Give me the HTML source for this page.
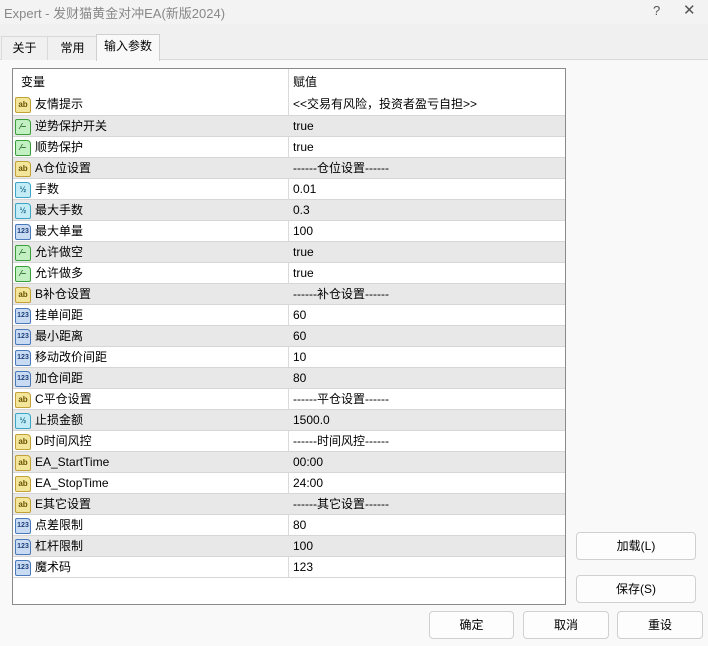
<!DOCTYPE html>
<html><head><meta charset="utf-8"><style>
body{margin:0;width:708px;height:645px;background:#f0f0f0;font-family:"Liberation Sans","Noto Sans CJK SC",sans-serif;font-size:12px;color:#000;position:relative;overflow:hidden}
.title{position:absolute;left:0;top:0;width:708px;height:24px;background:#f3f3f3;color:#888;font-size:13px}
.title span{position:absolute;top:3px}
.tab{position:absolute;top:36px;height:23px;line-height:22px;text-align:center;border:1px solid #d9d9d9;border-bottom:none;background:#f0f0f0;font-size:12px}
.panel{position:absolute;left:0;top:59px;width:708px;height:586px;background:#f9f9f9;border-top:1px solid #d9d9d9}
.tbl{position:absolute;left:12px;top:68px;width:552px;height:535px;border:1px solid #8a8a8a;background:#fff}
.row{position:absolute;left:0;width:552px;height:21px;line-height:21px}
.row.g{background:#e8e8e8}
.row.b{border-top:1px solid #d6d6d6;height:20px}
.c1{position:absolute;left:22px}
.c2{position:absolute;left:280px}
.div{position:absolute;left:275px;top:0;width:1px;height:508px;background:#dadada}
.ic{position:absolute;left:2px;top:3px;width:14px;height:14px;border:1px solid;border-radius:2px 4px 2px 2px;font-size:8px;line-height:14px;text-align:center;font-weight:bold}
.ab{background:#f3e59a;border-color:#c2a238;color:#6b5300}
.gr{background:#c3f0c3;border-color:#3a9e3a;color:#206020}
.hf{background:#c3ecf7;border-color:#3ea4c6;color:#176a8a}
.nm{background:#c9dbf2;border-color:#4a78bd;color:#1d3f7a;font-size:7px}
.btn{position:absolute;height:26px;line-height:26px;text-align:center;background:#fdfdfd;border:1px solid #d0d0d0;border-radius:4px;font-size:12px}
</style></head><body>
<div class="title"><span style="left:4px">Expert - 发财猫黄金对冲EA(新版2024)</span><span style="left:653px;color:#555">?</span><span style="left:683px;color:#555;font-size:15px;top:1px">✕</span></div>
<div class="panel"></div>
<div class="tab" style="left:1px;width:45px">关于</div>
<div class="tab" style="left:47px;width:49px">常用</div>
<div class="tab" style="left:96px;top:34px;height:26px;width:62px;background:#f9f9f9;border-color:#d0d0d0;z-index:2">输入参数</div>
<div class="tbl">
<div class="div"></div>
<div class="row" style="top:1px;height:24px;line-height:24px"><span class="c1" style="left:8px">变量</span><span class="c2">赋值</span></div>
<div class="row" style="top:25px"><div class="ic ab">ab</div><span class="c1">友情提示</span><span class="c2">&lt;&lt;交易有风险，投资者盈亏自担&gt;&gt;</span></div>
<div class="row g b" style="top:46px"><div class="ic gr">⁄‒</div><span class="c1">逆势保护开关</span><span class="c2">true</span></div>
<div class="row b" style="top:67px"><div class="ic gr">⁄‒</div><span class="c1">顺势保护</span><span class="c2">true</span></div>
<div class="row g b" style="top:88px"><div class="ic ab">ab</div><span class="c1">A仓位设置</span><span class="c2">------仓位设置------</span></div>
<div class="row b" style="top:109px"><div class="ic hf">½</div><span class="c1">手数</span><span class="c2">0.01</span></div>
<div class="row g b" style="top:130px"><div class="ic hf">½</div><span class="c1">最大手数</span><span class="c2">0.3</span></div>
<div class="row b" style="top:151px"><div class="ic nm">123</div><span class="c1">最大单量</span><span class="c2">100</span></div>
<div class="row g b" style="top:172px"><div class="ic gr">⁄‒</div><span class="c1">允许做空</span><span class="c2">true</span></div>
<div class="row b" style="top:193px"><div class="ic gr">⁄‒</div><span class="c1">允许做多</span><span class="c2">true</span></div>
<div class="row g b" style="top:214px"><div class="ic ab">ab</div><span class="c1">B补仓设置</span><span class="c2">------补仓设置------</span></div>
<div class="row b" style="top:235px"><div class="ic nm">123</div><span class="c1">挂单间距</span><span class="c2">60</span></div>
<div class="row g b" style="top:256px"><div class="ic nm">123</div><span class="c1">最小距离</span><span class="c2">60</span></div>
<div class="row b" style="top:277px"><div class="ic nm">123</div><span class="c1">移动改价间距</span><span class="c2">10</span></div>
<div class="row g b" style="top:298px"><div class="ic nm">123</div><span class="c1">加仓间距</span><span class="c2">80</span></div>
<div class="row b" style="top:319px"><div class="ic ab">ab</div><span class="c1">C平仓设置</span><span class="c2">------平仓设置------</span></div>
<div class="row g b" style="top:340px"><div class="ic hf">½</div><span class="c1">止损金额</span><span class="c2">1500.0</span></div>
<div class="row b" style="top:361px"><div class="ic ab">ab</div><span class="c1">D时间风控</span><span class="c2">------时间风控------</span></div>
<div class="row g b" style="top:382px"><div class="ic ab">ab</div><span class="c1">EA_StartTime</span><span class="c2">00:00</span></div>
<div class="row b" style="top:403px"><div class="ic ab">ab</div><span class="c1">EA_StopTime</span><span class="c2">24:00</span></div>
<div class="row g b" style="top:424px"><div class="ic ab">ab</div><span class="c1">E其它设置</span><span class="c2">------其它设置------</span></div>
<div class="row b" style="top:445px"><div class="ic nm">123</div><span class="c1">点差限制</span><span class="c2">80</span></div>
<div class="row g b" style="top:466px"><div class="ic nm">123</div><span class="c1">杠杆限制</span><span class="c2">100</span></div>
<div class="row b" style="top:487px;border-bottom:1px solid #d6d6d6"><div class="ic nm">123</div><span class="c1">魔术码</span><span class="c2">123</span></div>
</div>
<div class="btn" style="left:576px;top:532px;width:118px">加载(L)</div>
<div class="btn" style="left:576px;top:575px;width:118px">保存(S)</div>
<div class="btn" style="left:429px;top:611px;width:83px">确定</div>
<div class="btn" style="left:523px;top:611px;width:84px">取消</div>
<div class="btn" style="left:617px;top:611px;width:84px">重设</div>
</body></html>
